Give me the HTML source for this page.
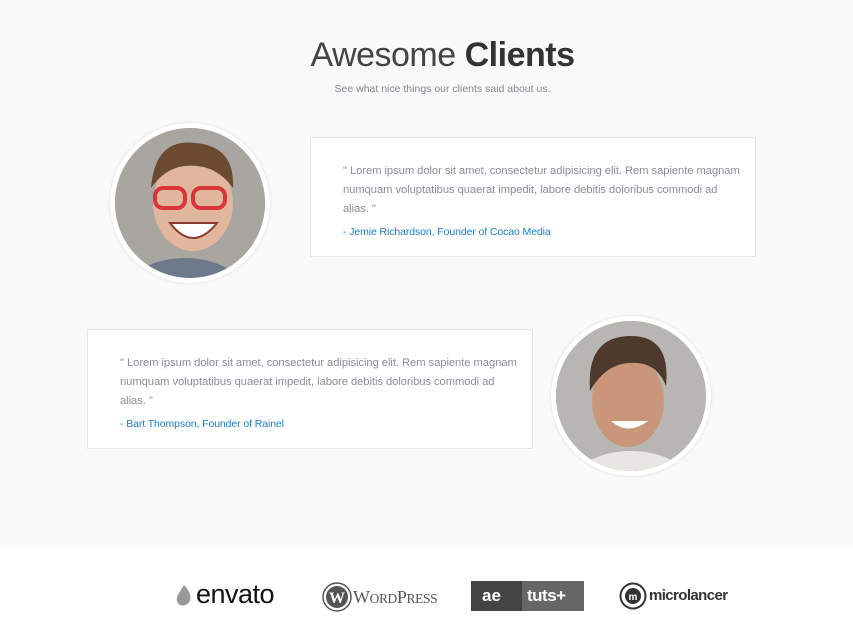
<!DOCTYPE html>
<html><head><meta charset="utf-8"><style>
body{margin:0;width:853px;height:644px;background:#f9f9f9;font-family:"Liberation Sans",sans-serif;position:relative;overflow:hidden}
h1{position:absolute;top:36px;left:0;width:885px;text-align:center;margin:0;font-size:34px;font-weight:300;color:#444;letter-spacing:-0.5px}
h1 b{font-weight:700;color:#333}
.sub{position:absolute;top:83px;left:0;width:885px;text-align:center;font-size:10.5px;color:#8a8590}
.card{position:absolute;width:446px;height:120px;background:#fff;border:1px solid #e6e6e6;box-sizing:border-box;padding:24px 0 0 32px;white-space:nowrap}
.card p{margin:0;font-size:11.2px;line-height:19px;color:#8f8a96;letter-spacing:-0.05px}
.card .a{margin-top:7px;font-size:10.5px;color:#1a7fc4;letter-spacing:-0.1px}
.av{position:absolute;width:160px;height:160px;border-radius:50%;background:#fff;box-shadow:0 0 3px rgba(0,0,0,.12)}
.av div{position:absolute;left:5px;top:5px;width:150px;height:150px;border-radius:50%;overflow:hidden;background:#9c9894}
.foot{position:absolute;top:545px;left:0;width:853px;height:99px;background:#fff}
</style></head><body>
<h1>Awesome <b>Clients</b></h1>
<div class="sub">See what nice things our clients said about us.</div>
<div class="av" style="left:110px;top:123px"><div>
<svg width="150" height="150"><rect width="150" height="150" fill="#a9a5a0"/><ellipse cx="70" cy="160" rx="55" ry="30" fill="#6e7a8a"/><ellipse cx="78" cy="75" rx="40" ry="48" fill="#e0b79d"/><path d="M36 60 Q40 10 80 15 Q120 18 118 60 Q100 35 70 38 Q50 40 36 60Z" fill="#6b4a30"/><rect x="40" y="60" width="30" height="20" rx="8" fill="none" stroke="#d9343c" stroke-width="4"/><rect x="78" y="60" width="32" height="20" rx="8" fill="none" stroke="#d9343c" stroke-width="4"/><path d="M55 95 Q78 125 102 95Z" fill="#fff" stroke="#8a3b2e" stroke-width="2"/></svg></div></div>
<div class="card" style="left:310px;top:137px"><p>" Lorem ipsum dolor sit amet, consectetur adipisicing elit. Rem sapiente magnam<br>numquam voluptatibus quaerat impedit, labore debitis doloribus commodi ad<br>alias. "</p><div class="a">- Jemie Richardson, Founder of Cocao Media</div></div>
<div class="card" style="left:87px;top:329px"><p>" Lorem ipsum dolor sit amet, consectetur adipisicing elit. Rem sapiente magnam<br>numquam voluptatibus quaerat impedit, labore debitis doloribus commodi ad<br>alias. "</p><div class="a">- Bart Thompson, Founder of Rainel</div></div>
<div class="av" style="left:551px;top:316px"><div>
<svg width="150" height="150"><rect width="150" height="150" fill="#b8b6b2"/><ellipse cx="75" cy="165" rx="60" ry="35" fill="#e8e6e2"/><ellipse cx="72" cy="80" rx="36" ry="46" fill="#c9967a"/><path d="M34 70 Q30 15 75 15 Q115 15 110 65 Q100 40 75 42 Q50 42 34 70Z" fill="#4d3a2c"/><path d="M55 100 Q72 115 92 100Z" fill="#fff"/></svg></div></div>
<div class="foot">
<svg style="position:absolute;left:176px;top:40px" width="16" height="22"><path d="M8 0 Q16 8 14 16 Q10 22 4 20 Q-2 16 3 8Z" fill="#999"/></svg>
<div style="position:absolute;left:196px;top:34px;font-size:27px;color:#111;letter-spacing:-0.5px">envato</div>
<svg style="position:absolute;left:322px;top:37px" width="30" height="30"><circle cx="15" cy="15" r="14" fill="#fff" stroke="#555" stroke-width="1.5"/><circle cx="15" cy="15" r="11" fill="#555"/><text x="15" y="21" font-size="16" font-family="Liberation Serif" fill="#fff" text-anchor="middle" font-weight="bold">W</text></svg>
<div style="position:absolute;left:353px;top:42px;font-family:'Liberation Serif',serif;font-size:18px;color:#555;letter-spacing:-0.4px">W<span style="font-size:13.5px">ORD</span>P<span style="font-size:13.5px">RESS</span></div>
<div style="position:absolute;left:471px;top:36px;width:113px;height:30px;background:#666"><div style="width:51px;height:30px;background:#444"></div></div>
<div style="position:absolute;left:482px;top:41px;font-size:17px;font-weight:bold;color:#fff">ae</div>
<div style="position:absolute;left:527px;top:41px;font-size:17px;font-weight:bold;color:#fff;letter-spacing:-0.5px">tuts+</div>
<svg style="position:absolute;left:619px;top:37px" width="28" height="28"><circle cx="14" cy="14" r="12.5" fill="none" stroke="#333" stroke-width="2"/><circle cx="14" cy="14" r="8" fill="#333"/><text x="14" y="18" font-size="10" fill="#fff" text-anchor="middle" font-weight="bold">m</text></svg>
<div style="position:absolute;left:649px;top:42px;font-size:15px;font-weight:bold;color:#333;letter-spacing:-0.6px">microlancer</div>
</div>
</body></html>
